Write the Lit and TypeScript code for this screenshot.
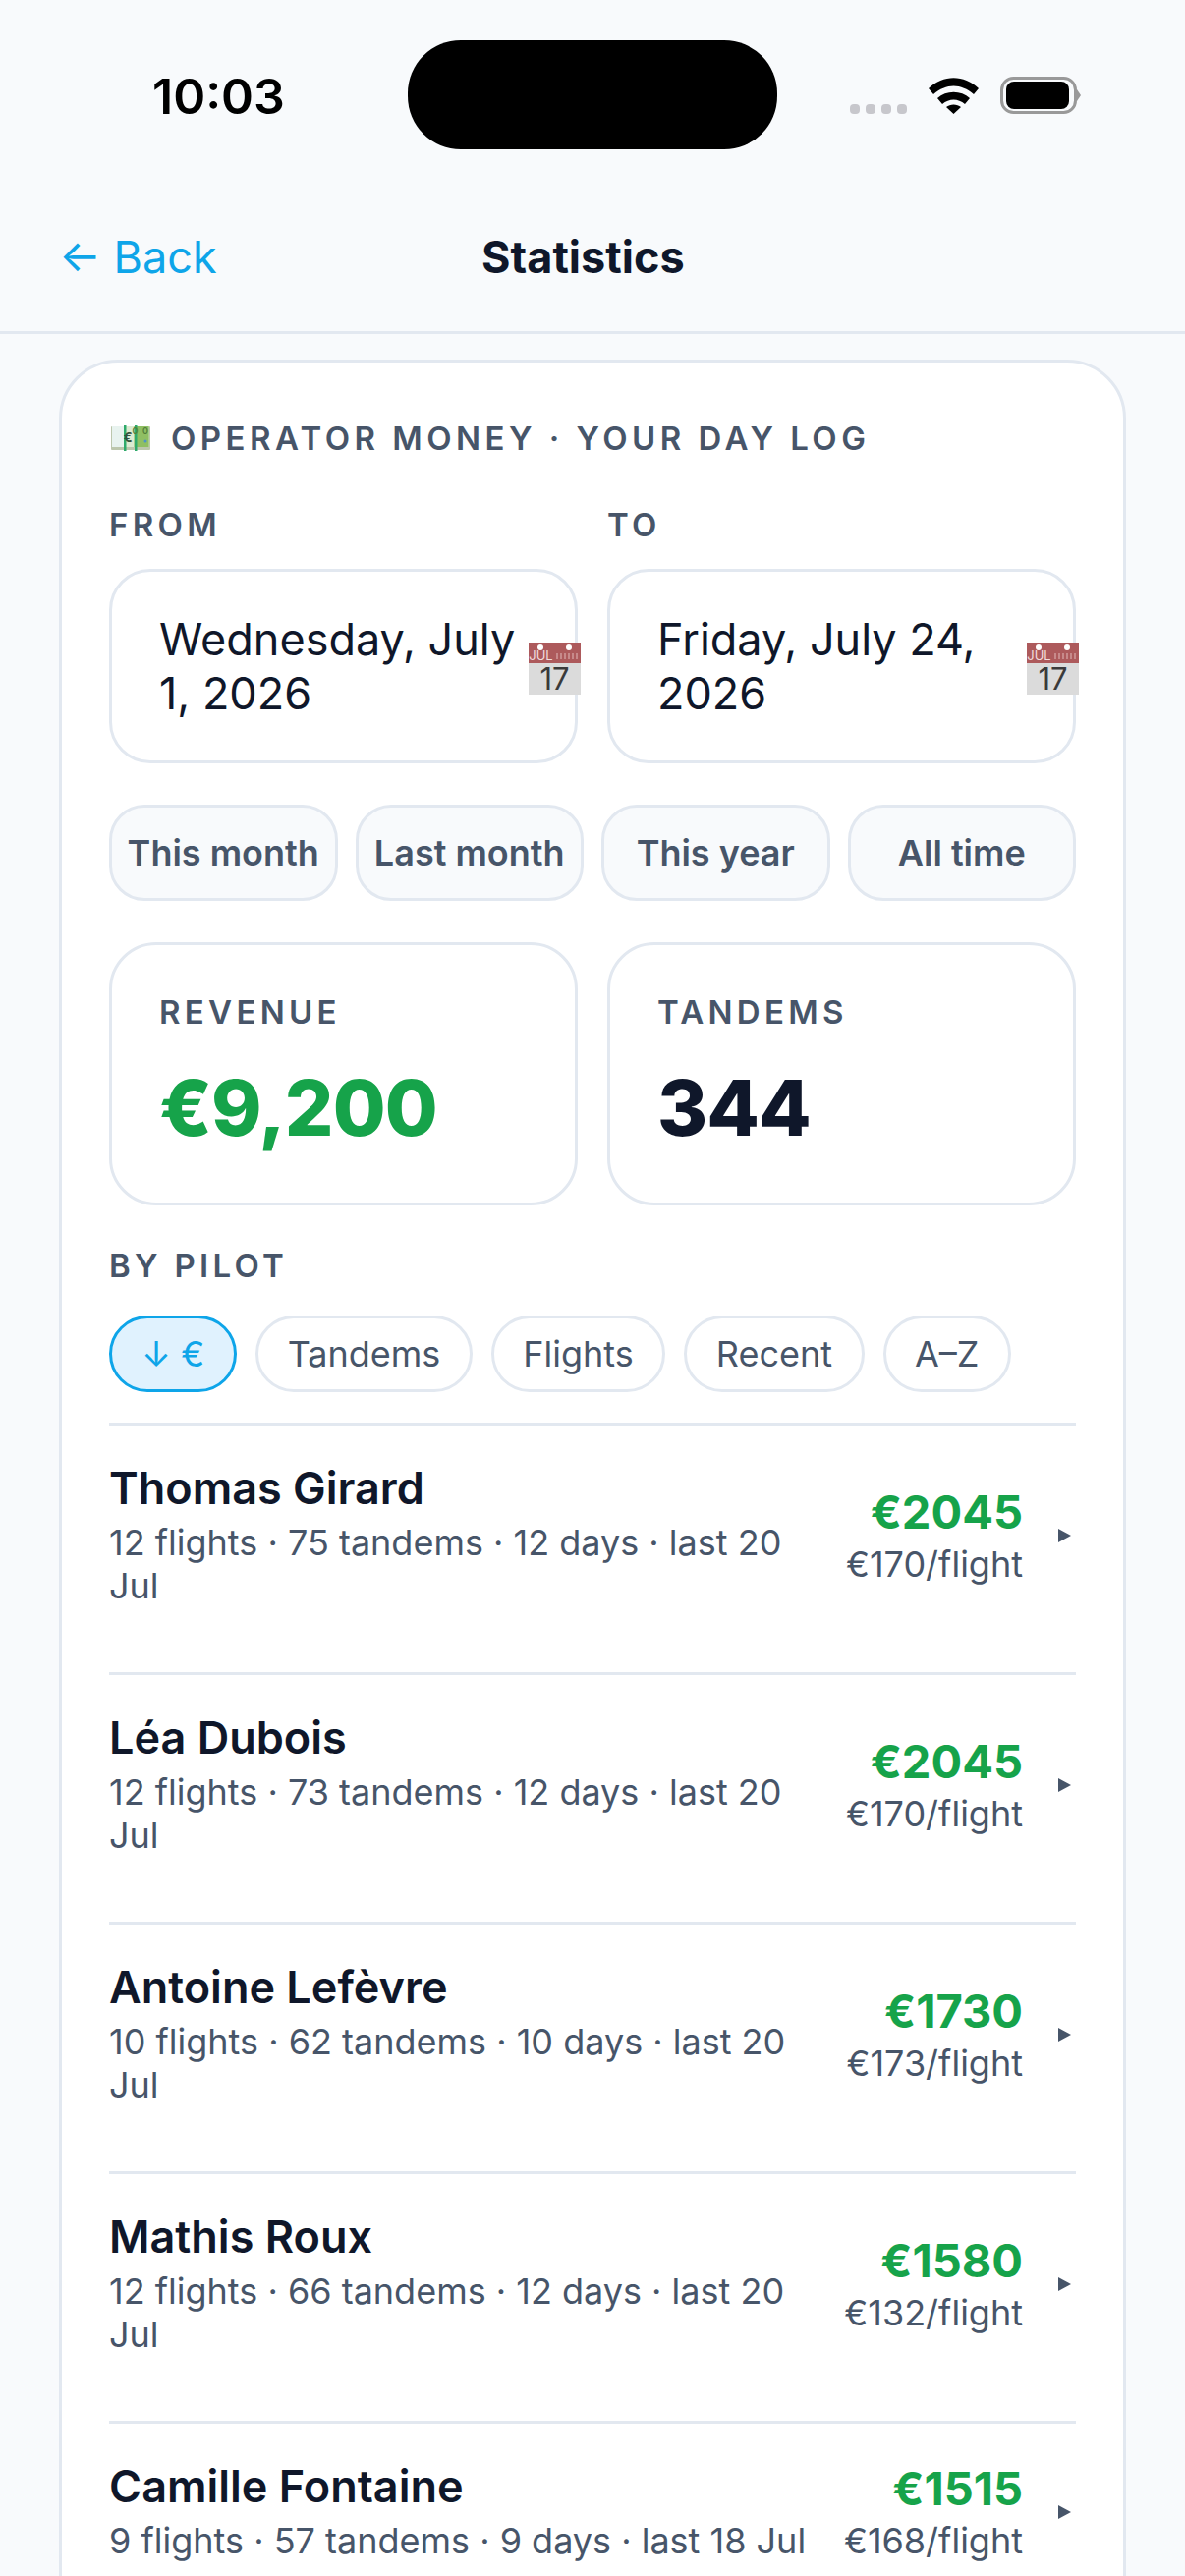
import { LitElement, html, css, svg } from 'lit';
import { customElement } from 'lit/decorators.js';

const presets = ['This month', 'Last month', 'This year', 'All time'];
const sorts = ['↓ €', 'Tandems', 'Flights', 'Recent', 'A–Z'];

const pilots = [
  { name: 'Thomas Girard', sub: '12 flights · 75 tandems · 12 days · last 20 Jul', total: '€2045', rate: '€170/flight' },
  { name: 'Léa Dubois', sub: '12 flights · 73 tandems · 12 days · last 20 Jul', total: '€2045', rate: '€170/flight' },
  { name: 'Antoine Lefèvre', sub: '10 flights · 62 tandems · 10 days · last 20 Jul', total: '€1730', rate: '€173/flight' },
  { name: 'Mathis Roux', sub: '12 flights · 66 tandems · 12 days · last 20 Jul', total: '€1580', rate: '€132/flight' },
  { name: 'Camille Fontaine', sub: '9 flights · 57 tandems · 9 days · last 18 Jul', total: '€1515', rate: '€168/flight' },
];

const wifiIcon = svg`
  <svg width="51" height="37" viewBox="0 0 51 37">
    <path d="M0 11 C15 -3.500 36 -3.500 51 11 L46 17 C33 5.500 18 5.500 5 17 Z" fill="#000" />
    <path d="M9 21 C18 12.500 33 12.500 42 21 L37 27 C30 21 21 21 14 27 Z" fill="#000" />
    <path d="M18 30 C22 26.500 29 26.500 33 30 L25.500 37 Z" fill="#000" />
  </svg>`;

const batteryIcon = svg`
  <svg width="82" height="38" viewBox="0 0 82 38">
    <rect x="1.500" y="1.500" width="75" height="35" rx="12" fill="none" stroke="#999" stroke-width="3" />
    <rect x="6" y="5" width="64" height="28" rx="8" fill="#000" />
    <path d="M78 13 L82 19 L78 25 Z" fill="#999" />
  </svg>`;

const moneyIcon = svg`
  <svg class="money" width="40" height="26" viewBox="0 0 40 26">
    <rect x="0" y="1" width="40" height="24" rx="1" fill="#bcc7ad" />
    <rect x="1" y="1" width="13" height="21" fill="#e8f3ef" />
    <rect x="14" y="1" width="25" height="21" fill="#a9cf8b" />
    <rect x="14" y="1" width="9" height="21" fill="#dcebd2" />
    <rect x="25" y="1" width="13" height="21" fill="#8fbf63" />
    <rect x="13" y="0" width="2.500" height="26" fill="#2faa6b" />
    <rect x="24" y="0" width="2.500" height="26" fill="#2faa6b" />
    <text x="19.500" y="17" font-family="Inter, sans-serif" font-size="13" font-weight="700" fill="#33513c" text-anchor="middle">€</text>
    <text x="32" y="9" font-family="Inter, sans-serif" font-size="9" font-weight="600" fill="#52803a" text-anchor="middle">00</text>
    <circle cx="35" cy="16" r="1.500" fill="#4d93c9" />
  </svg>`;

const calendarIcon = svg`
  <svg class="calendar" width="53" height="53" viewBox="0 0 53 53">
    <rect x="0" y="0" width="53" height="21" fill="#ad5a5c" />
    <rect x="0" y="21" width="53" height="32" fill="#dbdbdb" />
    <circle cx="12" cy="5" r="3" fill="#fff" />
    <circle cx="41" cy="5" r="3" fill="#fff" />
    <text x="12.500" y="18" font-family="Inter, sans-serif" font-size="13" fill="#f2dcdc" text-anchor="middle">JUL</text>
    <path d="M29 17 V11 M33 17 V11 M37 17 V11 M41 17 V11 M45 17 V11 M49 17 V11" stroke="#cf9a9b" stroke-width="1.500" />
    <text x="26.500" y="48" font-family="Inter, sans-serif" font-size="31" fill="#3a3a3a" text-anchor="middle">17</text>
  </svg>`;

const caretIcon = svg`
  <svg width="13" height="14" viewBox="0 0 13 14"><path d="M0 0 L13 7 L0 14 Z" fill="#475569" /></svg>`;

@customElement('app-root')
export class AppRoot extends LitElement {
  static styles = css`
    :host {
      display: block;
      height: 2622px;
      overflow: hidden;
      background: #f8fafc;
      color: #0f172a;
      font-family: Inter, 'Noto Sans', sans-serif;
    }

    .status {
      display: grid;
      grid-template-columns: 415px 376px 1fr;
      padding-top: 41px;
      height: 111px;
    }

    .time {
      padding: 3px 0 0 155px;
      font-size: 50px;
      font-weight: 600;
      line-height: 108px;
      color: #000;
    }

    .island {
      height: 111px;
      background: #000;
      border-radius: 54px;
    }

    .status-icons {
      display: flex;
      align-items: flex-end;
      gap: 22px;
      padding-left: 74px;
      height: 75px;
    }

    .dots {
      display: flex;
      gap: 6px;
    }

    .dots span {
      width: 10px;
      height: 10px;
      border-radius: 4px;
      background: #c7c7cc;
    }

    .status-icons svg {
      display: block;
    }

    .nav {
      display: flex;
      justify-content: space-between;
      align-items: center;
      height: 188px;
      padding: 34px 60px 0;
      box-sizing: border-box;
      border-bottom: 3px solid #e2e8f0;
      margin-bottom: 26px;
      font-size: 45px;
      line-height: 72px;
      white-space: nowrap;
    }

    .back {
      color: #0ea5e9;
      font-weight: 400;
    }

    .nav-title {
      font-weight: 700;
    }

    .nav-spacer {
      width: 180px;
    }

    .card {
      margin: 0 60px;
      padding: 48px;
      background: #fff;
      border: 3px solid #e2e8f0;
      border-radius: 60px;
    }

    .card-title {
      display: flex;
      align-items: center;
      gap: 21px;
      height: 58px;
      color: #475569;
      font-size: 33px;
      font-weight: 600;
      letter-spacing: 0.135em;
    }

    .money {
      margin-left: 2px;
    }

    .label {
      color: #475569;
      font-size: 33px;
      font-weight: 600;
      letter-spacing: 0.13em;
      line-height: 42px;
    }

    .dates {
      display: grid;
      grid-template-columns: 1fr 1fr;
      gap: 30px;
      margin-top: 38px;
    }

    .date-field .label {
      margin-bottom: 24px;
    }

    .date-box {
      display: flex;
      align-items: center;
      height: 198px;
      box-sizing: border-box;
      padding-left: 48px;
      border: 3px solid #e2e8f0;
      border-radius: 42px;
      background: #fff;
      font-size: 45px;
      line-height: 55px;
    }

    .date-text {
      flex: 1;
      min-width: 0;
    }

    .calendar {
      flex-shrink: 0;
      margin: 4px -6px 0 0;
      overflow: visible;
    }

    .presets {
      display: grid;
      grid-template-columns: repeat(4, 1fr);
      gap: 18px;
      margin-top: 42px;
    }

    .preset {
      display: flex;
      align-items: center;
      justify-content: center;
      height: 98px;
      box-sizing: border-box;
      border: 3px solid #e2e8f0;
      border-radius: 36px;
      background: #f8fafc;
      color: #475569;
      font-size: 36px;
      font-weight: 600;
      white-space: nowrap;
    }

    .stats {
      display: grid;
      grid-template-columns: 1fr 1fr;
      gap: 30px;
      margin-top: 42px;
    }

    .stat {
      height: 268px;
      box-sizing: border-box;
      padding: 47px 48px;
      border: 3px solid #e2e8f0;
      border-radius: 48px;
    }

    .stat-value {
      margin-top: 26px;
      font-size: 78px;
      font-weight: 800;
      letter-spacing: -0.012em;
      line-height: 102px;
    }

    .green {
      color: #16a34a;
    }

    .by-pilot {
      margin-top: 40px;
    }

    .sorts {
      display: flex;
      gap: 19px;
      margin-top: 30px;
    }

    .sort {
      display: flex;
      align-items: center;
      height: 78px;
      box-sizing: border-box;
      padding: 0 29.500px;
      border: 3px solid #e2e8f0;
      border-radius: 39px;
      color: #475569;
      font-size: 36px;
    }

    .sort.active {
      padding: 0 30px;
      border-color: #0ea5e9;
      background: #e0f2fe;
      color: #0ea5e9;
    }

    .rows {
      margin-top: 31px;
    }

    .row {
      display: flex;
      align-items: center;
      border-top: 3px solid #e2e8f0;
      padding: 37px 0 66px;
    }

    .row-main {
      flex: 1;
      min-width: 0;
    }

    .row-name {
      font-size: 45px;
      font-weight: 600;
      line-height: 54px;
    }

    .row-sub {
      margin-top: 6px;
      padding-right: 38px;
      color: #475569;
      font-size: 36px;
      line-height: 44px;
    }

    .row-side {
      flex-shrink: 0;
      margin-top: 2px;
      text-align: right;
    }

    .row-total {
      color: #16a34a;
      font-size: 47px;
      font-weight: 700;
      line-height: 54px;
    }

    .row-rate {
      margin-top: 4px;
      color: #475569;
      font-size: 36px;
      line-height: 44px;
    }

    .row svg {
      flex-shrink: 0;
      margin: 2px 5px 0 36px;
    }
  `;

  renderDate(label: string, value: string) {
    return html`
      <div class="date-field">
        <div class="label">${label}</div>
        <div class="date-box">
          <div class="date-text">${value}</div>
          ${calendarIcon}
        </div>
      </div>
    `;
  }

  render() {
    return html`
      <div class="status">
        <div class="time">10:03</div>
        <div class="island"></div>
        <div class="status-icons">
          <div class="dots"><span></span><span></span><span></span><span></span></div>
          ${wifiIcon} ${batteryIcon}
        </div>
      </div>

      <div class="nav">
        <div class="back">← Back</div>
        <div class="nav-title">Statistics</div>
        <div class="nav-spacer"></div>
      </div>

      <div class="card">
        <div class="card-title">${moneyIcon}<span>OPERATOR MONEY · YOUR DAY LOG</span></div>

        <div class="dates">
          ${this.renderDate('FROM', 'Wednesday, July 1, 2026')}
          ${this.renderDate('TO', 'Friday, July 24, 2026')}
        </div>

        <div class="presets">
          ${presets.map((p) => html`<div class="preset">${p}</div>`)}
        </div>

        <div class="stats">
          <div class="stat">
            <div class="label">REVENUE</div>
            <div class="stat-value green">€9,200</div>
          </div>
          <div class="stat">
            <div class="label">TANDEMS</div>
            <div class="stat-value">344</div>
          </div>
        </div>

        <div class="label by-pilot">BY PILOT</div>
        <div class="sorts">
          ${sorts.map((s, i) => html`<div class="sort ${i === 0 ? 'active' : ''}">${s}</div>`)}
        </div>

        <div class="rows">
          ${pilots.map(
            (p) => html`
              <div class="row">
                <div class="row-main">
                  <div class="row-name">${p.name}</div>
                  <div class="row-sub">${p.sub}</div>
                </div>
                <div class="row-side">
                  <div class="row-total">${p.total}</div>
                  <div class="row-rate">${p.rate}</div>
                </div>
                ${caretIcon}
              </div>
            `
          )}
        </div>
      </div>
    `;
  }
}
